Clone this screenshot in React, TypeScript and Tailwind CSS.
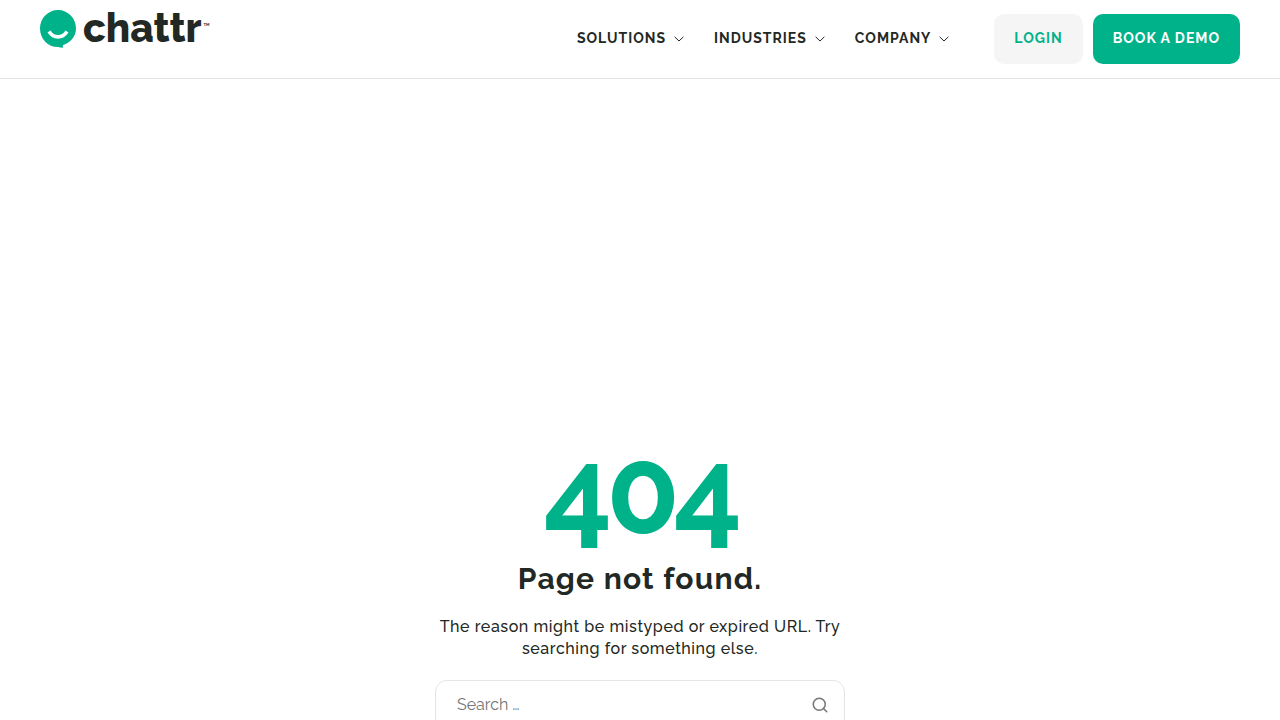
import React from "react";
import { Search } from "lucide-react";

const menus = ["Solutions", "Industries", "Company"];

function Logo() {
  return (
    <a href="/" aria-label="chattr home" className="flex h-10 items-start gap-[7px] text-[#222823]">
      <svg viewBox="0 0 36 38" className="h-[38px] w-9 shrink-0" aria-hidden="true">
        <path
          fill="#00b28a"
          d="M18 0C8 0 0 8.200 0 18.500s8 18.600 18 18.600c1.600.5 3.300.7 5.200.7-.5-1-.5-1.900-.2-2.800C30.800 32.700 36 26.300 36 18.500 36 8.200 28 0 18 0Z"
        />
        <path d="M9 21.500c4.700 7.200 13.300 7.200 18 0" fill="none" stroke="#fff" strokeWidth="3.600" />
      </svg>
      <span className="text-[40px] font-extrabold leading-9">chattr</span>
      <span className="-ml-[5px] pt-[13px] text-[4px] font-bold leading-none">TM</span>
    </a>
  );
}

function Caret() {
  return (
    <svg viewBox="0 0 10 6" className="mt-[2px] h-[6px] w-[10px]" aria-hidden="true">
      <path d="M.6.800 5 5 9.400.8" fill="none" stroke="currentColor" />
    </svg>
  );
}

export default function App() {
  return (
    <div className="bg-white font-['Raleway','Lato',sans-serif] text-[#222823]">
      <header className="flex items-start justify-between border-b border-[#e5e5e5] px-10">
        <div className="pt-[10px]">
          <Logo />
        </div>
        <div className="flex items-center gap-[45px] py-[14px]">
          <nav aria-label="Main" className="flex items-center gap-[30px]">
            {menus.map((name) => (
              <button
                key={name}
                type="button"
                className="flex items-center gap-2 pb-[2px] text-sm font-bold uppercase tracking-[1px]"
              >
                {name}
                <Caret />
              </button>
            ))}
          </nav>
          <div className="flex gap-[10px] text-sm font-bold uppercase leading-5 tracking-[1px]">
            <a href="/login" className="rounded-[10px] bg-[#f5f5f5] px-5 pb-4 pt-[14px] text-[#00b28a]">
              Login
            </a>
            <a href="/demo" className="rounded-[10px] bg-[#00b28a] px-5 pb-4 pt-[14px] text-white">
              Book a demo
            </a>
          </div>
        </div>
      </header>

      <main className="flex flex-col items-center px-10 pb-20 pt-[352px] text-center">
        <h1 className="text-[120px] font-bold leading-[120px] tracking-tighter text-[#00b28a]">404</h1>
        <h2 className="mt-2 text-[30px] font-bold leading-10 tracking-[0.04em]">Page not found.</h2>
        <p className="mt-[17px] max-w-[410px] text-base font-medium leading-[22px] tracking-[0.035em]">
          The reason might be mistyped or expired URL. Try searching for something else.
        </p>
        <form
          role="search"
          className="mt-5 flex h-[50px] w-full max-w-[410px] items-center rounded-[12px] border border-[#e5e5e5] pl-[21px] pr-[15px]"
        >
          <input
            type="search"
            aria-label="Search"
            placeholder="Search …"
            className="min-w-0 flex-1 bg-transparent text-base outline-none placeholder:text-[#757575]"
          />
          <button type="submit" aria-label="Submit search" className="text-[#757575]">
            <Search className="size-[18px]" strokeWidth={2} aria-hidden="true" />
          </button>
        </form>
      </main>
    </div>
  );
}
